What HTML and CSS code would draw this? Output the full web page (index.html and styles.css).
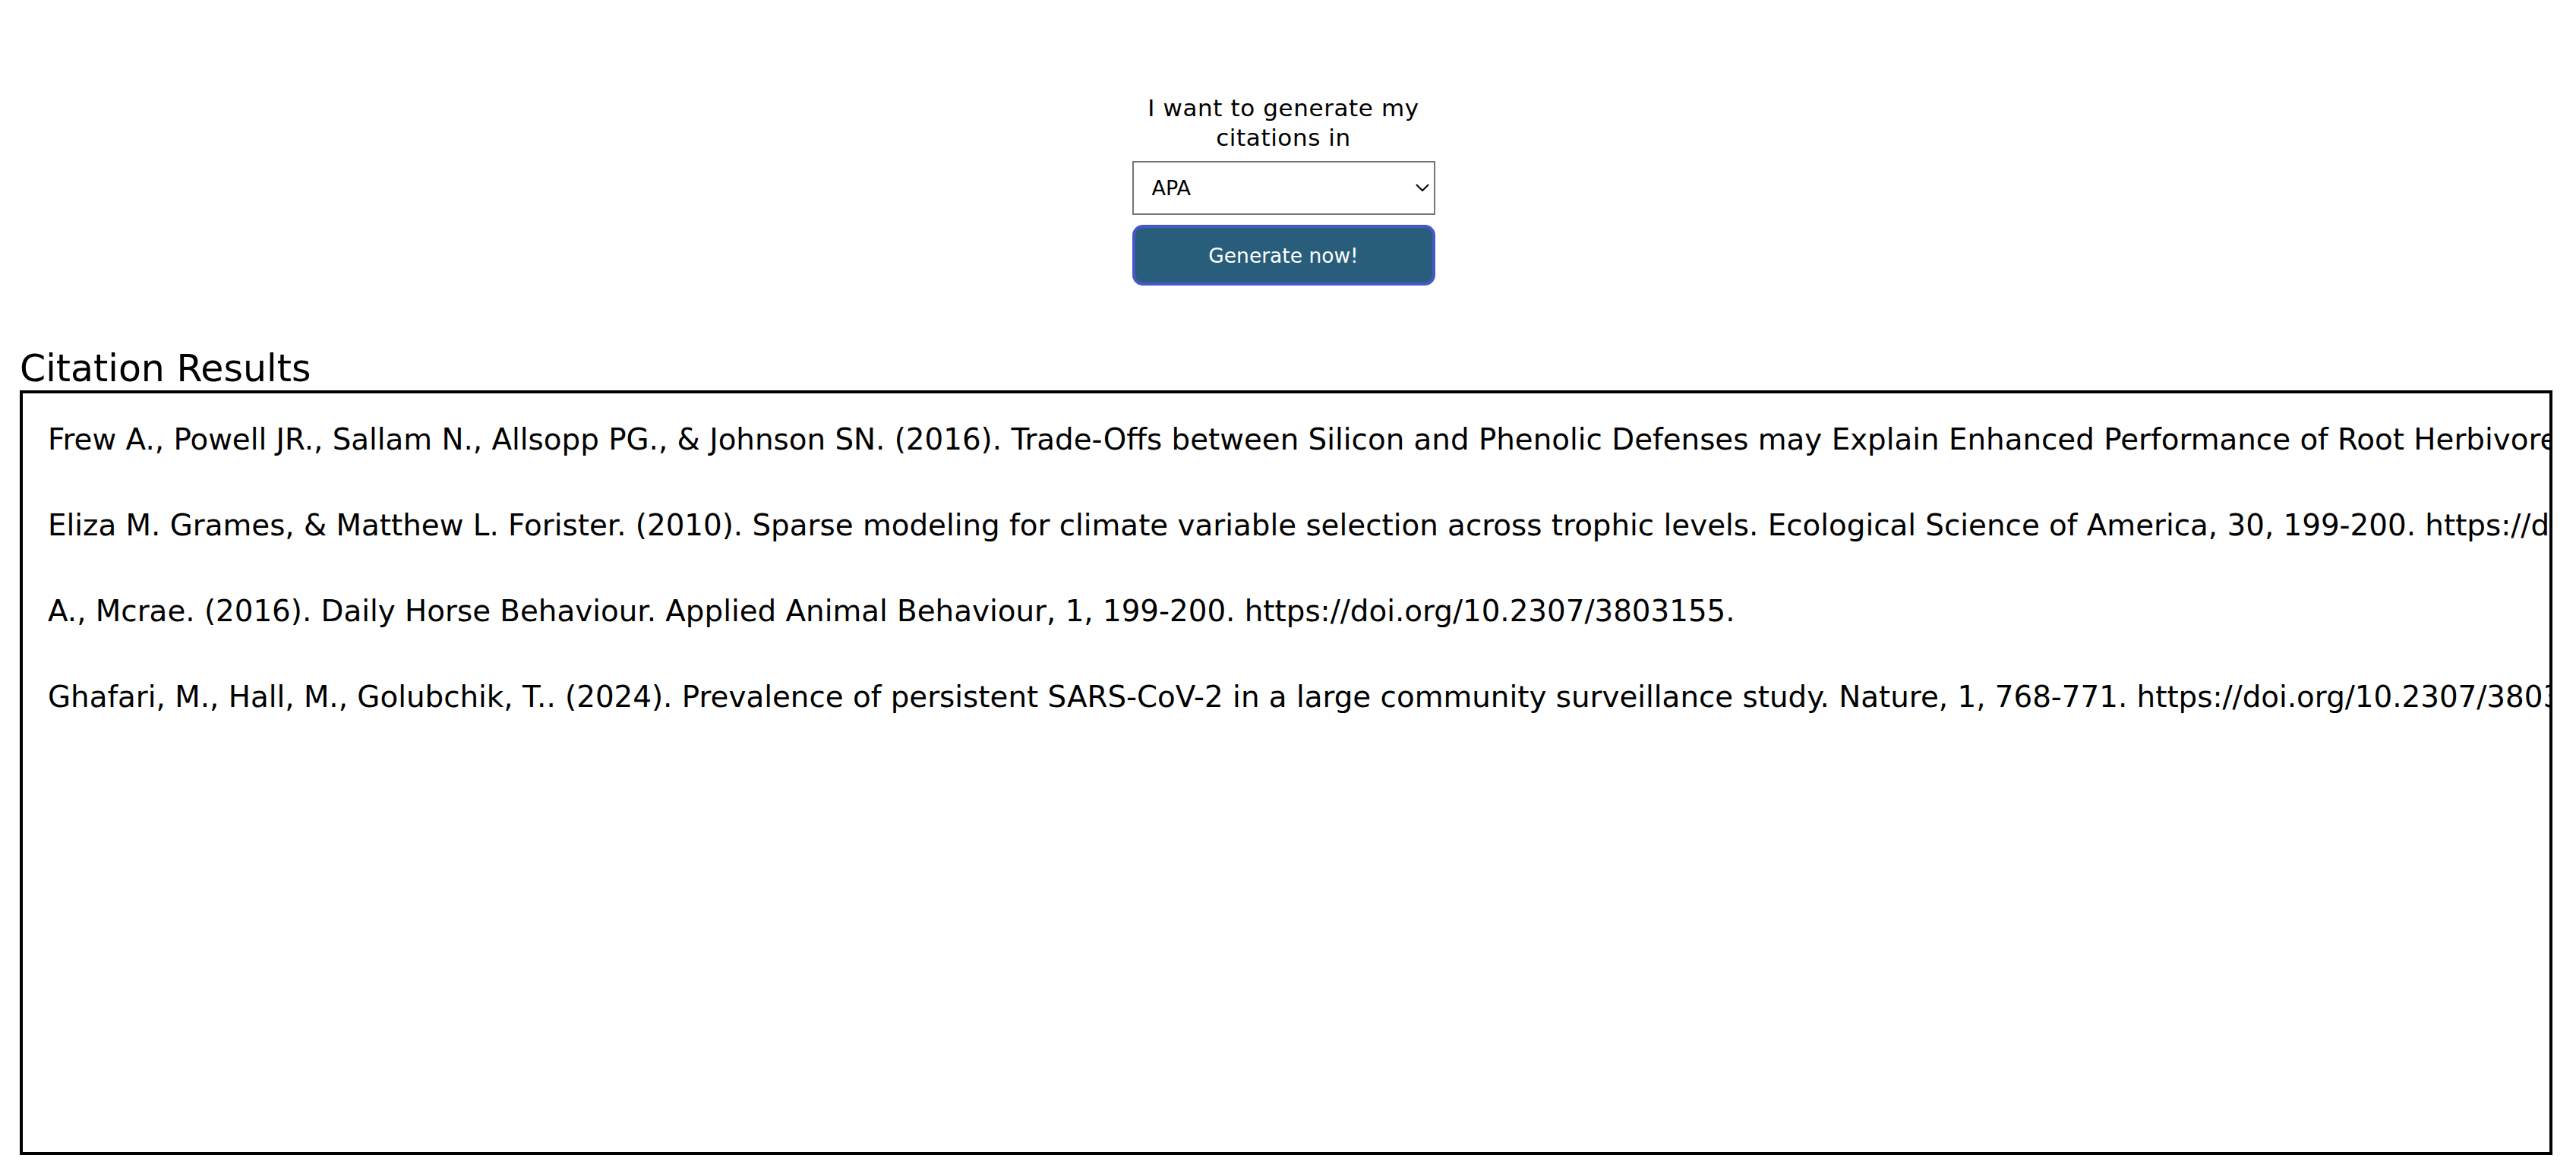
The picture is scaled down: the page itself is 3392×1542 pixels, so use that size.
FILE: index.html
```html
<!DOCTYPE html>
<html lang="en">
<head>
<meta charset="utf-8">
<title>Citation Generator</title>
<link rel="stylesheet" href="styles.css">
</head>
<body>
<main class="page">
  <form class="generator">
    <label class="generator-label" for="style">I want to generate my citations in</label>
    <div class="select-wrap">
      <select id="style" class="style-select">
        <option>APA</option>
        <option>MLA</option>
        <option>Chicago</option>
        <option>Harvard</option>
      </select>
      <svg class="select-arrow" viewBox="0 0 18 10" width="18" height="10" aria-hidden="true"><path d="M1 1 L9 9 L17 1" fill="none" stroke="#000" stroke-width="2"/></svg>
    </div>
    <button type="button" class="generate-btn">Generate now!</button>
  </form>
  <h2 class="results-title">Citation Results</h2>
  <section class="results">
    <p class="citation">Frew A., Powell JR., Sallam N., Allsopp PG., &amp; Johnson SN. (2016). Trade-Offs between Silicon and Phenolic Defenses may Explain Enhanced Performance of Root Herbivores on Phenolic-Rich Plants. Journal of Chemical Ecology, 42, 768-771. https://doi.org/10.1007/s10886-016-0734-7.</p>
    <p class="citation">Eliza M. Grames, &amp; Matthew L. Forister. (2010). Sparse modeling for climate variable selection across trophic levels. Ecological Science of America, 30, 199-200. https://doi.org/10.2307/3803155.</p>
    <p class="citation">A., Mcrae. (2016). Daily Horse Behaviour. Applied Animal Behaviour, 1, 199-200. https://doi.org/10.2307/3803155.</p>
    <p class="citation">Ghafari, M., Hall, M., Golubchik, T.. (2024). Prevalence of persistent SARS-CoV-2 in a large community surveillance study. Nature, 1, 768-771. https://doi.org/10.2307/3803155.</p>
  </section>
</main>
</body>
</html>
```
FILE: styles.css
```css
html, body {
  margin: 0;
  padding: 0;
  background: #ffffff;
}
body {
  font-family: "DejaVu Sans", "Open Sans", sans-serif;
  color: #000;
}
.page {
  padding: 0 31px 0 26px;
}
.generator {
  width: 399px;
  margin-left: calc(50% - 203px);
  padding-top: 123px;
  display: flex;
  flex-direction: column;
}
.generator-label {
  font-size: 31px;
  letter-spacing: 0.6px;
  line-height: 39px;
  text-align: center;
}
.select-wrap {
  position: relative;
  margin-top: 11px;
}
.style-select {
  appearance: none;
  -webkit-appearance: none;
  display: block;
  width: 399px;
  height: 71px;
  box-sizing: border-box;
  border: 2px solid #767676;
  border-radius: 0;
  background: #fff;
  padding: 0 0 0 24px;
  font-family: inherit;
  font-size: 27px;
  color: #000;
}
.select-arrow {
  position: absolute;
  right: 8px;
  top: 30px;
  pointer-events: none;
}
.generate-btn {
  margin-top: 13px;
  width: 399px;
  height: 80px;
  box-sizing: border-box;
  border: 4px solid #4658c8;
  border-radius: 14px;
  background: #285e7c;
  color: #fff;
  font-family: inherit;
  font-size: 26.5px;
}
.results-title {
  margin: 82px 0 0 0;
  font-size: 49px;
  line-height: 56px;
  font-weight: normal;
}
.results {
  box-sizing: border-box;
  height: 1007px;
  border: 4px solid #000;
  overflow: hidden;
  padding: 4px 33px 0 33px;
}
.citation {
  margin: 0;
  white-space: nowrap;
  font-size: 38.8px;
  line-height: 113px;
}
```
